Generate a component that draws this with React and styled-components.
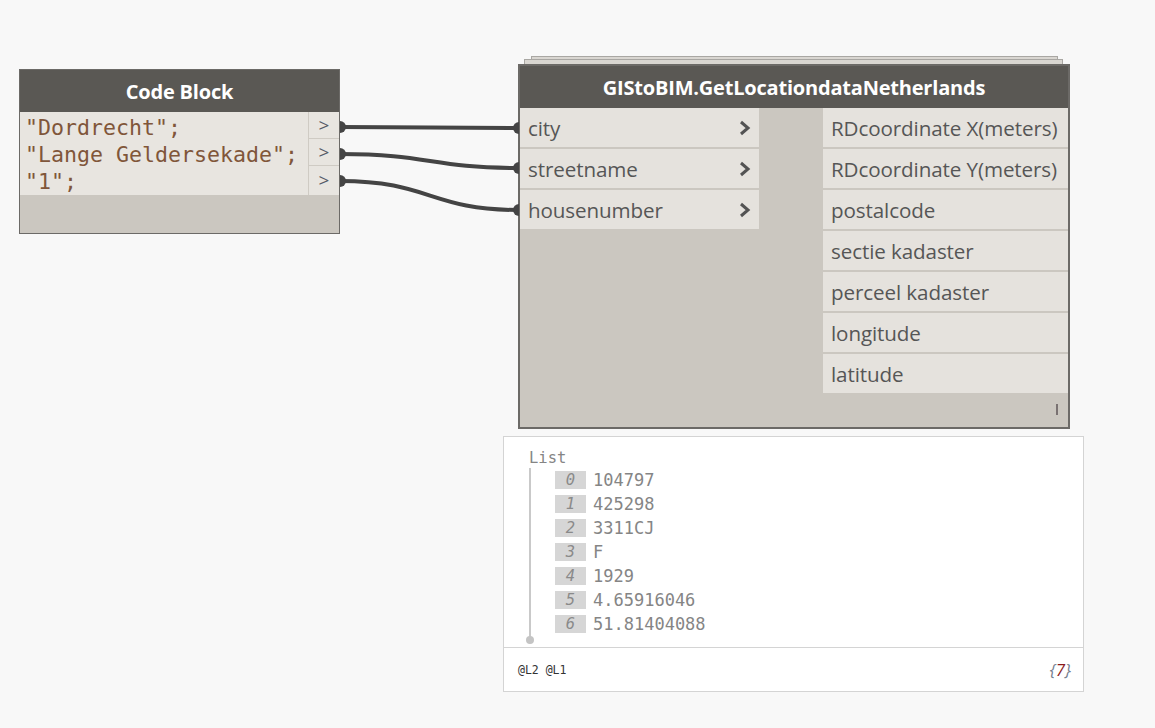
import styled, { createGlobalStyle } from 'styled-components';

const GlobalStyle = createGlobalStyle`
  body {
    margin: 0;
    background: #f8f8f8;
  }
`;

const Canvas = styled.div`
  position: relative;
  width: 1155px;
  height: 728px;
  overflow: hidden;
  background: #f8f8f8;
  font-family: 'Open Sans', 'DejaVu Sans', sans-serif;
`;

const Node = styled.div`
  position: absolute;
  left: ${(p) => p.$x}px;
  top: ${(p) => p.$y}px;
  width: ${(p) => p.$w}px;
  height: ${(p) => p.$h}px;
  box-sizing: border-box;
  border: ${(p) => p.$border || 1}px solid #6c6a67;
  background: #cbc7c0;
  display: flex;
  flex-direction: column;
`;

const StackFrame = styled.div`
  position: absolute;
  left: ${(p) => p.$x}px;
  top: ${(p) => p.$y}px;
  width: ${(p) => p.$w}px;
  height: 40px;
  box-sizing: border-box;
  border: 1px solid #a9a7a3;
  background: #d9d6d1;
`;

const Header = styled.div`
  height: 42px;
  flex: none;
  background: #5a5854;
  color: #fff;
  font-weight: 700;
  font-size: 20px;
  display: flex;
  align-items: center;
  justify-content: center;
  letter-spacing: -0.2px;
`;

const CodeBody = styled.div`
  display: flex;
  height: 83px;
  background: #e8e5e0;
`;

const CodeText = styled.pre`
  flex: 1;
  margin: 0;
  padding: 2px 0 0 5px;
  font-family: 'DejaVu Sans Mono', 'Liberation Mono', monospace;
  font-size: 21.6px;
  line-height: 27px;
  color: #80563a;
`;

const PortCol = styled.div`
  width: 30px;
  border-left: 1px solid #cfcbc4;
  display: flex;
  flex-direction: column;
`;

const PortCell = styled.div`
  height: 27px;
  box-sizing: border-box;
  border-bottom: ${(p) => (p.$last ? 'none' : '1px solid #cfcbc4')};
  display: flex;
  align-items: center;
  justify-content: center;
  font-size: 19px;
  color: #555a66;
`;

const NodeBody = styled.div`
  display: flex;
  justify-content: space-between;
  flex: 1;
  position: relative;
`;

const PortList = styled.div`
  width: ${(p) => p.$w}px;
  display: flex;
  flex-direction: column;
  gap: 2px;
`;

const PortRow = styled.div`
  height: 39px;
  background: #e5e2dd;
  display: flex;
  align-items: center;
  justify-content: space-between;
  padding: 0 8px 0 ${(p) => p.$pad}px;
  font-size: 20.6px;
  color: #565656;
  letter-spacing: -0.1px;
`;

const Chevron = () => (
  <svg width="12" height="16" viewBox="0 0 12 16">
    <polyline points="2,2 9,8 2,14" fill="none" stroke="#535353" strokeWidth="3" />
  </svg>
);

const GripMark = styled.div`
  position: absolute;
  right: 10px;
  bottom: 12px;
  width: 2px;
  height: 11px;
  background: #7a7272;
`;

const Preview = styled.div`
  position: absolute;
  left: 503px;
  top: 436px;
  width: 581px;
  height: 256px;
  box-sizing: border-box;
  border: 1px solid #d4d4d4;
  background: #fff;
  display: flex;
  flex-direction: column;
`;

const PreviewMain = styled.div`
  flex: 1;
  padding: 11px 0 0 25px;
  font-family: 'DejaVu Sans Mono', 'Liberation Mono', monospace;
  color: #858585;
`;

const ListLabel = styled.div`
  font-size: 15.5px;
  line-height: 20px;
`;

const ListTree = styled.div`
  position: relative;
  border-left: 2px solid #c9c9c9;
  padding-left: 24px;
  padding-bottom: 6px;

  &::after {
    content: '';
    position: absolute;
    left: -5px;
    bottom: -2px;
    width: 8px;
    height: 8px;
    border-radius: 50%;
    background: #c4c4c4;
  }
`;

const ListRow = styled.div`
  display: flex;
  align-items: center;
  height: 24px;
`;

const IndexBox = styled.span`
  width: 31px;
  height: 18px;
  background: #d6d6d6;
  font-style: italic;
  font-size: 15.5px;
  line-height: 18px;
  text-align: center;
  color: #8a8a8a;
`;

const Value = styled.span`
  margin-left: 7px;
  font-size: 17px;
  color: #858585;
`;

const PreviewFooter = styled.div`
  height: 43px;
  border-top: 1px solid #d4d4d4;
  display: flex;
  align-items: center;
  justify-content: space-between;
  padding: 0 12px 0 14px;
`;

const Levels = styled.span`
  font-family: 'DejaVu Sans Mono', 'Liberation Mono', monospace;
  font-size: 11.5px;
  color: #333;
`;

const Count = styled.span`
  font-style: italic;
  font-size: 17px;
  color: #75808f;

  b {
    font-weight: 400;
    color: #8b1a1a;
  }
`;

const Wires = styled.svg`
  position: absolute;
  left: 0;
  top: 0;
  pointer-events: none;
`;

const wires = [
  [127, 128],
  [154, 168],
  [181, 210],
];

const inputs = ['city', 'streetname', 'housenumber'];
const outputs = [
  'RDcoordinate X(meters)',
  'RDcoordinate Y(meters)',
  'postalcode',
  'sectie kadaster',
  'perceel kadaster',
  'longitude',
  'latitude',
];
const values = ['104797', '425298', '3311CJ', 'F', '1929', '4.65916046', '51.81404088'];

export default function App() {
  return (
    <Canvas>
      <GlobalStyle />

      <Node $x={19} $y={69} $w={321} $h={165}>
        <Header>Code Block</Header>
        <CodeBody>
          <CodeText>{'"Dordrecht";\n"Lange Geldersekade";\n"1";'}</CodeText>
          <PortCol>
            <PortCell>&gt;</PortCell>
            <PortCell>&gt;</PortCell>
            <PortCell $last>&gt;</PortCell>
          </PortCol>
        </CodeBody>
      </Node>

      <StackFrame $x={531} $y={56} $w={527} />
      <StackFrame $x={524} $y={59} $w={539} />
      <Node $x={518} $y={64} $w={552} $h={365} $border={2}>
        <Header>GIStoBIM.GetLocationdataNetherlands</Header>
        <NodeBody>
          <PortList $w={239}>
            {inputs.map((name) => (
              <PortRow key={name} $pad={8}>
                {name}
                <Chevron />
              </PortRow>
            ))}
          </PortList>
          <PortList $w={245}>
            {outputs.map((name) => (
              <PortRow key={name} $pad={8}>
                {name}
              </PortRow>
            ))}
          </PortList>
          <GripMark />
        </NodeBody>
      </Node>

      <Preview>
        <PreviewMain>
          <ListLabel>List</ListLabel>
          <ListTree>
            {values.map((v, i) => (
              <ListRow key={i}>
                <IndexBox>{i}</IndexBox>
                <Value>{v}</Value>
              </ListRow>
            ))}
          </ListTree>
        </PreviewMain>
        <PreviewFooter>
          <Levels>@L2 @L1</Levels>
          <Count>
            {'{'}
            <b>7</b>
            {'}'}
          </Count>
        </PreviewFooter>
      </Preview>

      <Wires width="1155" height="728">
        {wires.map(([a, b], i) => (
          <g key={i} fill="#444">
            <path
              d={`M340,${a} C430,${a} 430,${b} 519,${b}`}
              stroke="#444"
              strokeWidth="4"
              fill="none"
            />
            <path d={`M340,${a - 6} A6,6 0 0 1 340,${a + 6} Z`} />
            <path d={`M519,${b - 6} A6,6 0 0 0 519,${b + 6} Z`} />
          </g>
        ))}
      </Wires>
    </Canvas>
  );
}
